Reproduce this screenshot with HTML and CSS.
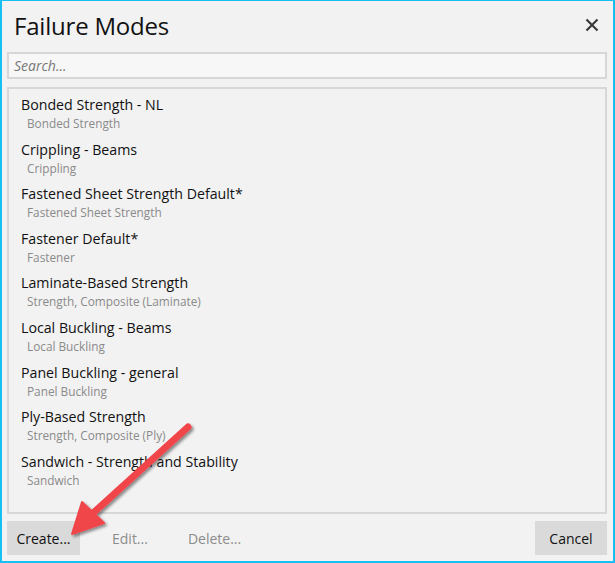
FILE: index.html
```html
<!DOCTYPE html>
<html>
<head>
<meta charset="utf-8">
<link rel="stylesheet" href="styles.css">
</head>
<body>
<div class="window">
  <div class="header">
    <div class="title">Failure Modes</div>
    <div class="close">
      <svg width="14" height="14" viewBox="0 0 14 14"><path d="M1.5 1.5 L12.5 12.5 M12.5 1.5 L1.5 12.5" stroke="#3a3a3a" stroke-width="2.2" fill="none"/></svg>
    </div>
  </div>
  <div class="search"><span class="placeholder">Search...</span></div>
  <div class="list">
    <div class="item"><div class="name">Bonded Strength - NL</div><div class="sub">Bonded Strength</div></div>
    <div class="item"><div class="name">Crippling - Beams</div><div class="sub">Crippling</div></div>
    <div class="item"><div class="name">Fastened Sheet Strength Default*</div><div class="sub">Fastened Sheet Strength</div></div>
    <div class="item"><div class="name">Fastener Default*</div><div class="sub">Fastener</div></div>
    <div class="item"><div class="name">Laminate-Based Strength</div><div class="sub">Strength, Composite (Laminate)</div></div>
    <div class="item"><div class="name">Local Buckling - Beams</div><div class="sub">Local Buckling</div></div>
    <div class="item"><div class="name">Panel Buckling - general</div><div class="sub">Panel Buckling</div></div>
    <div class="item"><div class="name">Ply-Based Strength</div><div class="sub">Strength, Composite (Ply)</div></div>
    <div class="item"><div class="name">Sandwich - Strength and Stability</div><div class="sub">Sandwich</div></div>
  </div>
  <div class="buttons">
    <div class="btn primary">Create...</div>
    <div class="btn disabled edit">Edit...</div>
    <div class="btn disabled delete">Delete...</div>
    <div class="spacer"></div>
    <div class="btn primary cancel">Cancel</div>
  </div>
  <svg class="arrow" width="615" height="563" viewBox="0 0 615 563">
    <defs>
      <filter id="sh" x="-20%" y="-20%" width="140%" height="140%">
        <feGaussianBlur in="SourceAlpha" stdDeviation="1.5"/>
        <feOffset dx="2" dy="2" result="b"/>
        <feComponentTransfer><feFuncA type="linear" slope="0.45"/></feComponentTransfer>
        <feMerge><feMergeNode/><feMergeNode in="SourceGraphic"/></feMerge>
      </filter>
    </defs>
    <g filter="url(#sh)">
      <line x1="188" y1="427" x2="92" y2="514" stroke="#f0444a" stroke-width="7" stroke-linecap="round"/>
      <polygon points="72,534 82,502 104,523" fill="#f0444a" stroke="#f0444a" stroke-width="2" stroke-linejoin="round"/>
    </g>
  </svg>
</div>
</body>
</html>
```
FILE: styles.css
```css
html, body {
  margin: 0;
  padding: 0;
}
body {
  font-family: "Open Sans", "Noto Sans", sans-serif;
  background: #f2f2f2;
}
.window {
  position: relative;
  width: 615px;
  height: 563px;
  box-sizing: border-box;
  border: 2px solid #17c0f2;
  border-top-width: 1px;
  background: #f2f2f2;
  display: flex;
  flex-direction: column;
  padding: 0 6px 6px 5px;
  overflow: hidden;
}
.header {
  height: 51px;
  display: flex;
  align-items: center;
  justify-content: space-between;
}
.title {
  font-size: 24px;
  color: #111;
  padding-left: 7px;
  margin-top: -2px;
  letter-spacing: -0.2px;
}
.close {
  width: 14px;
  height: 14px;
  margin-right: 8px;
  margin-top: -4px;
  display: flex;
}
.search {
  height: 27px;
  box-sizing: border-box;
  border: 2px solid #d7d7d7;
  background: #f7f7f7;
  display: flex;
  align-items: center;
  padding-left: 5px;
}
.placeholder {
  font-style: italic;
  font-size: 14px;
  color: #777;
}
.list {
  margin-top: 8px;
  flex: 1;
  box-sizing: border-box;
  border: 2px solid #d7d7d7;
  background: #f2f2f2;
  padding: 5px 0 0 12px;
}
.item {
  height: 44.6px;
}
.name {
  font-size: 14.2px;
  line-height: 21px;
  color: #111;
}
.sub {
  font-size: 11.8px;
  line-height: 16px;
  color: #8a8a8a;
  padding-left: 6px;
}
.buttons {
  margin-top: 7px;
  height: 34px;
  display: flex;
}
.btn {
  height: 34px;
  display: flex;
  align-items: center;
  justify-content: center;
  font-size: 14px;
  box-sizing: border-box;
}
.primary {
  background: #dadada;
  color: #111;
  width: 73px;
}
.cancel {
  width: 72px;
}
.disabled {
  color: #8c8c8c;
}
.edit {
  margin-left: 32px;
}
.delete {
  margin-left: 40px;
}
.spacer {
  flex: 1;
}
.arrow {
  position: absolute;
  left: -2px;
  top: -1px;
  pointer-events: none;
}
```
